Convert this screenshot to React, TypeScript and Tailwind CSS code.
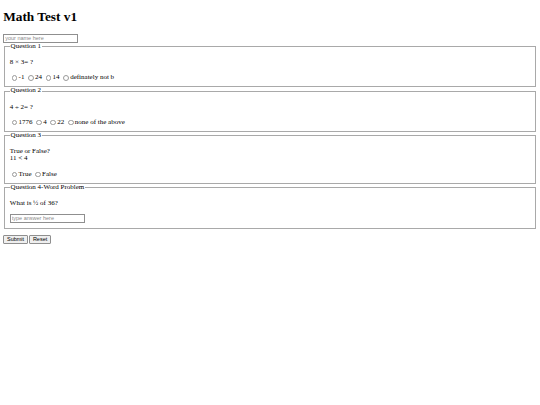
import React from "react";

function Radio({ name, label }: { name: string; label: string }) {
    return (
        <span className="flex items-center mr-[1.8px]">
            <input
                type="radio"
                name={name}
                className="appearance-none block w-[5.6px] h-[5.6px] rounded-full border-[0.6px] border-[#9a9a9a] bg-white ml-[2px] mr-[1.2px]"
            />
            <label>{label}</label>
        </span>
    );
}

function Question({ legend, children }: { legend: string; children: React.ReactNode }) {
    return (
        <fieldset className="mx-[0.8px] border-[0.8px] border-[#a9a9a9] px-[4.8px] pt-[2.4px] pb-[4.8px]">
            <legend className="px-[0.8px]">{legend}</legend>
            {children}
        </fieldset>
    );
}

const field =
    "block w-[75px] h-[9.3px] border-[0.6px] border-[#8f8f8f] px-[1px] font-['Liberation_Sans',sans-serif] text-[5.5px] placeholder:text-[#8a8a8a] outline-none";

const btn =
    "h-[9.2px] px-[2.8px] border-[0.6px] border-[#8f8f8f] rounded-[1px] bg-[#efefef] leading-none";

const row = "flex items-center h-[8.8px] pt-[1.8px]";

export default function App() {
    return (
        <div className="min-h-[405px] bg-white px-[3.2px] pt-[0.1px] text-black font-['Liberation_Serif',serif] text-[7px] leading-[7.36px]">
            <h1 className="mt-[8.6px] mb-[9.6px] text-[13.3px] font-bold leading-[15.3px]">Math Test v1</h1>
            <form>
                <input type="text" placeholder="your name here" className={field} />
                <Question legend="Question 1">
                    <p className="my-[6.4px]">8 × 3= ?</p>
                    <div className={row}>
                        <Radio name="q1" label="-1" />
                        <Radio name="q1" label="24" />
                        <Radio name="q1" label="14" />
                        <Radio name="q1" label="definately not b" />
                    </div>
                </Question>
                <Question legend="Question 2">
                    <p className="my-[6.4px]">4 ÷ 2= ?</p>
                    <div className={row}>
                        <Radio name="q2" label="1776" />
                        <Radio name="q2" label="4" />
                        <Radio name="q2" label="22" />
                        <Radio name="q2" label="none of the above" />
                    </div>
                </Question>
                <Question legend="Question 3">
                    <p className="my-[6.4px]">
                        True or False?
                        <br />
                        11 &lt; 4
                    </p>
                    <div className={row}>
                        <Radio name="q3" label="True" />
                        <Radio name="q3" label="False" />
                    </div>
                </Question>
                <Question legend="Question 4-Word Problem">
                    <p className="my-[6.4px]">What is ½ of 36?</p>
                    <input type="text" placeholder="type answer here" className={field} />
                </Question>
                <div className="mt-[6.2px] flex gap-[1.2px] font-['Liberation_Sans',sans-serif] text-[5.5px]">
                    <button type="submit" className={btn}>
                        Submit
                    </button>
                    <button type="reset" className={btn}>
                        Reset
                    </button>
                </div>
            </form>
        </div>
    );
}
